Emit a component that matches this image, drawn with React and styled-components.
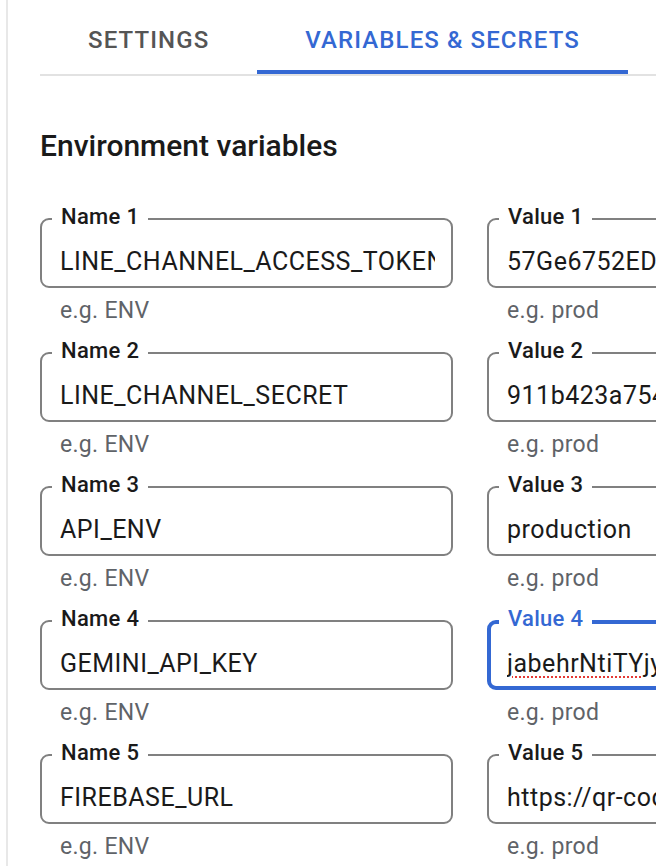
import styled, { createGlobalStyle } from "styled-components";

const GlobalStyle = createGlobalStyle`
  html, body {
    margin: 0;
    background: #fff;
    overflow: hidden;
  }
  body {
    font-family: Roboto, "Liberation Sans", Arial, sans-serif;
    -webkit-font-smoothing: antialiased;
  }
`;

const variables = [
  { name: 'LINE_CHANNEL_ACCESS_TOKEN', value: '57Ge6752EDa1c9f0b3e8d7' },
  { name: 'LINE_CHANNEL_SECRET', value: '911b423a754c0e9d2f16ab' },
  { name: 'API_ENV', value: 'production' },
  { name: 'GEMINI_API_KEY', value: 'jabehrNtiTYjyKq8LmZwP', focused: true, misspelled: true },
  { name: 'FIREBASE_URL', value: 'https://qr-code-app-default-rtdb.firebaseio.com' },
];

const Field = ({ label, value, helper, focused = false, misspelled = false }) => (
  <FieldWrap>
    <Box $focused={focused}>
      <Label $focused={focused}>{label}</Label>
      <Text>
        <Content $misspelled={misspelled}>{value}</Content>
      </Text>
    </Box>
    <Helper>{helper}</Helper>
  </FieldWrap>
);

const App = () => {
  return (
    <>
      <GlobalStyle />
      <Page>
        <TabBar>
          <Tab>Settings</Tab>
          <Tab $active>Variables &amp; Secrets</Tab>
        </TabBar>

        <Heading>Environment variables</Heading>

        <Grid>
          {variables.map((v, i) => (
            <Row key={`var_${i}`}>
              <Field label={`Name ${i + 1}`} value={v.name} helper="e.g. ENV" />
              <Field
                label={`Value ${i + 1}`}
                value={v.value}
                helper="e.g. prod"
                focused={v.focused}
                misspelled={v.misspelled}
              />
            </Row>
          ))}
        </Grid>
      </Page>
    </>
  );
};

const Page = styled.div`
  margin-left: 6px;
  padding-left: 32px;
  border-left: 2px solid #e8e8e8;
  min-height: 866px;
  box-sizing: border-box;
`;

const TabBar = styled.div`
  display: flex;
  height: 76px;
  box-sizing: border-box;
  border-bottom: 2px solid #e2e2e2;
`;

const Tab = styled.div`
  display: flex;
  align-items: center;
  height: 74px;
  box-sizing: border-box;
  padding: 10px 48px 0;
  font-size: 24px;
  font-weight: 500;
  text-transform: uppercase;
  letter-spacing: 1.1px;
  color: ${({ $active }) => ($active ? '#3468d3' : '#555555')};
  border-bottom: 4px solid ${({ $active }) => ($active ? '#3468d3' : 'transparent')};
  white-space: nowrap;
`;

const Heading = styled.h2`
  margin: 52px 0 0;
  font-size: 30px;
  line-height: 36px;
  font-weight: 500;
  color: #1a1a1a;
`;

const Grid = styled.div`
  margin-top: 54px;
  display: flex;
  flex-direction: column;
`;

const Row = styled.div`
  display: grid;
  grid-template-columns: 413px 413px;
  column-gap: 34px;
`;

const FieldWrap = styled.div`
  display: flex;
  flex-direction: column;
  height: 134px;
`;

const Box = styled.div`
  position: relative;
  height: 70px;
  box-sizing: border-box;
  border: ${({ $focused }) => ($focused ? '4px solid #3468d3' : '2px solid #808080')};
  border-radius: 9px;
  padding: ${({ $focused }) => ($focused ? '25px 14px 0 16px' : '27px 16px 0 18px')};
  display: flex;
  align-items: flex-start;
`;

const Label = styled.div`
  position: absolute;
  top: ${({ $focused }) => ($focused ? '-18px' : '-16px')};
  left: ${({ $focused }) => ($focused ? '8px' : '10px')};
  padding: 0 9px;
  background: #fff;
  font-size: 22px;
  line-height: 26px;
  font-weight: 500;
  letter-spacing: 0.3px;
  color: ${({ $focused }) => ($focused ? '#3468d3' : '#1a1a1a')};
`;

const Text = styled.div`
  flex: 1;
  overflow: hidden;
  white-space: nowrap;
  font-size: 25px;
  line-height: 30px;
  letter-spacing: 0.5px;
  color: #1a1a1a;
`;

const Content = styled.span`
  text-decoration: ${({ $misspelled }) => ($misspelled ? 'underline dotted #e53935' : 'none')};
  text-decoration-thickness: 2px;
  text-underline-offset: 4px;
`;

const Helper = styled.div`
  margin-top: 11px;
  padding-left: 20px;
  font-size: 23px;
  line-height: 24px;
  letter-spacing: 0.3px;
  color: #5f6368;
`;

export default App;
